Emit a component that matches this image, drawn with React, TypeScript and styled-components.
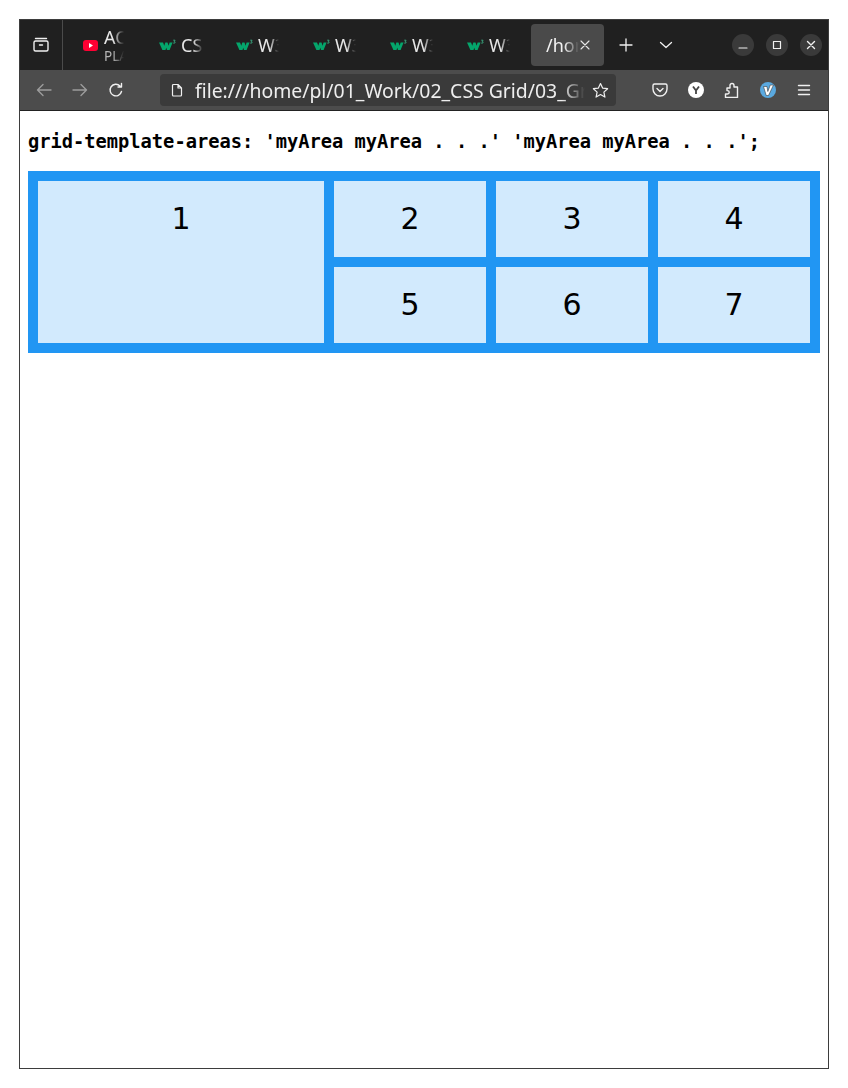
import React from "react";
import styled, { createGlobalStyle } from "styled-components";

const Global = createGlobalStyle`
  html, body { margin: 0; padding: 0; background: #fff; }
  body { width: 848px; height: 1088px; overflow: hidden; }
`;

const BrowserWindow = styled.div`
  box-sizing: border-box;
  width: 810px;
  height: 1050px;
  margin: 19px 0 0 19px;
  border: 1px solid #3d3d3d;
  display: flex;
  flex-direction: column;
  font-family: "Noto Sans", sans-serif;
`;

const TabBar = styled.div`
  height: 50px;
  background: #202020;
  display: flex;
  align-items: stretch;
  flex: none;
`;

const ViewButton = styled.div`
  box-sizing: border-box;
  width: 43px;
  border-right: 1px solid #4b4b4b;
  display: flex;
  align-items: center;
  justify-content: center;
  flex: none;
`;

const TabStrip = styled.div`
  box-sizing: border-box;
  display: flex;
  align-items: center;
  padding-left: 7px;
  width: 468px;
  flex: none;
`;

const Tab = styled.div`
  box-sizing: border-box;
  width: 77px;
  height: 42px;
  padding-left: 12px;
  display: flex;
  align-items: center;
  gap: 5px;
  color: #e6e6e6;
  font-size: 18px;
  flex: none;
`;

const MediaTab = styled(Tab)`
  padding-left: 13px;
  gap: 6px;
`;

const TabLabel = styled.div<{ $w: number }>`
  width: ${(p) => p.$w}px;
  overflow: hidden;
  white-space: nowrap;
  flex: none;
  -webkit-mask-image: linear-gradient(to right, #000 55%, transparent 100%);
  mask-image: linear-gradient(to right, #000 55%, transparent 100%);
`;

const Stack = styled.div`
  display: flex;
  flex-direction: column;
  width: 20px;
  overflow: hidden;
  line-height: 1;
  white-space: nowrap;
  -webkit-mask-image: linear-gradient(to right, #000 45%, transparent 100%);
  mask-image: linear-gradient(to right, #000 45%, transparent 100%);
`;

const TabTitle = styled.span`
  font-size: 18px;
  line-height: 22px;
  color: #e8e8e8;
`;

const TabSub = styled.span`
  font-size: 13.5px;
  line-height: 17px;
  color: #b5b5b5;
`;

const ActiveTab = styled.div`
  box-sizing: border-box;
  width: 73px;
  height: 42px;
  align-self: center;
  border-radius: 4px;
  background: #4a4a4a;
  display: flex;
  align-items: center;
  padding-left: 15px;
  color: #f2f2f2;
  font-size: 18px;
  flex: none;
`;

const TabActions = styled.div`
  display: flex;
  align-items: center;
  flex: none;
  padding-left: 15px;
  gap: 26px;
`;

const WindowControls = styled.div`
  margin-left: auto;
  display: flex;
  align-items: center;
  gap: 12px;
  padding-right: 6px;
`;

const WinButton = styled.div`
  width: 22px;
  height: 22px;
  border-radius: 50%;
  background: #3a3a3a;
  display: flex;
  align-items: center;
  justify-content: center;
`;

const Toolbar = styled.div`
  height: 40px;
  background: #4c4c4c;
  border-bottom: 1px solid #222;
  display: flex;
  align-items: center;
  flex: none;
`;

const NavGroup = styled.div`
  display: flex;
  align-items: center;
  gap: 20px;
  padding-left: 16px;
  width: 140px;
  box-sizing: border-box;
  flex: none;
`;

const UrlBar = styled.div`
  box-sizing: border-box;
  width: 456px;
  height: 32px;
  background: #3a3a3a;
  border-radius: 4px;
  display: flex;
  align-items: center;
  padding: 0 7px 0 10px;
  flex: none;
`;

const UrlText = styled.div`
  flex: 1;
  min-width: 0;
  margin: 0 7px 0 11px;
  overflow: hidden;
  white-space: nowrap;
  color: #eeeeee;
  font-size: 19.4px;
  -webkit-mask-image: linear-gradient(to right, #000 94%, transparent 100%);
  mask-image: linear-gradient(to right, #000 94%, transparent 100%);
`;

const ToolIcons = styled.div`
  display: flex;
  align-items: center;
  gap: 20px;
  padding-left: 36px;
`;

const Page = styled.div`
  flex: 1;
  background: #fff;
  padding: 1px 8px 0;
`;

const Heading = styled.h3`
  margin: 18.72px 0;
  font-family: "DejaVu Sans Mono", monospace;
  font-weight: 700;
  font-size: 18.72px;
  line-height: 22px;
  color: #000;
  white-space: pre;
`;

const Grid = styled.div`
  display: grid;
  grid-template-columns: repeat(2, 138px) repeat(3, 152px);
  grid-template-areas:
    "myArea myArea . . ."
    "myArea myArea . . .";
  gap: 10px;
  padding: 10px;
  background: #2196f3;
`;

const Cell = styled.div<{ $area?: string }>`
  ${(p) => (p.$area ? `grid-area: ${p.$area};` : "")}
  background: rgba(255, 255, 255, 0.8);
  padding: 20px;
  text-align: center;
  font-family: "DejaVu Sans", sans-serif;
  font-size: 30px;
  line-height: 36px;
  color: #000;
`;

const W3 = () => (
  <svg width="17" height="14" viewBox="0 0 17 14" style={{ flex: "none" }}>
    <path d="M0 4.500h4l1.300 3.200L6.300 4.500h2.200l1.100 3.200 1-3.200h3l-3 7.500H8L7.300 9.800 6.500 12H3.400z" fill="#04a56b" />
    <path d="M14.200 2.200h1.900l-.9 1.200 .9 .5-.3 1.200h-1.600" fill="none" stroke="#3fb98d" strokeWidth=".8" />
  </svg>
);

const YouTube = () => (
  <svg width="15" height="11" viewBox="0 0 15 11" style={{ flex: "none" }}>
    <rect width="15" height="11" rx="3" fill="#ff0033" />
    <path d="M6 3l4 2.500L6 8z" fill="#fff" />
  </svg>
);

const Line = (p: { size?: number; color?: string; sw?: number; d: string; vb?: number }) => {
  const { size = 16, color = "#f0f0f0", sw = 1.4, d, vb = 16 } = p;
  return (
    <svg width={size} height={size} viewBox={`0 0 ${vb} ${vb}`} fill="none" stroke={color} strokeWidth={sw} strokeLinecap="round" strokeLinejoin="round" style={{ flex: "none" }}>
      <path d={d} />
    </svg>
  );
};

const App = () => (
  <>
    <Global />
    <BrowserWindow>
      <TabBar>
        <ViewButton>
          <Line size={18} vb={18} d="M3.500 2.500h11M2 6.500A1.500 1.500 0 0 1 3.500 5h11A1.500 1.500 0 0 1 16 6.500v7a1.500 1.500 0 0 1-1.500 1.500h-11A1.500 1.500 0 0 1 2 13.500zM7.500 9h3" />
        </ViewButton>
        <TabStrip>
          <MediaTab>
            <YouTube />
            <Stack>
              <TabTitle>AC</TabTitle>
              <TabSub>PLAY</TabSub>
            </Stack>
          </MediaTab>
          <Tab>
            <W3 />
            <TabLabel $w={22}>CSS</TabLabel>
          </Tab>
          <Tab>
            <W3 />
            <TabLabel $w={21}>W3</TabLabel>
          </Tab>
          <Tab>
            <W3 />
            <TabLabel $w={21}>W3</TabLabel>
          </Tab>
          <Tab>
            <W3 />
            <TabLabel $w={21}>W3</TabLabel>
          </Tab>
          <Tab>
            <W3 />
            <TabLabel $w={21}>W3</TabLabel>
          </Tab>
        </TabStrip>
        <ActiveTab>
          <TabLabel $w={33}>/home</TabLabel>
          <Line size={12} vb={12} sw={1.1} color="#e8e8e8" d="M2 2l8 8M10 2l-8 8" />
        </ActiveTab>
        <TabActions>
          <Line size={14} vb={14} sw={1.3} d="M7 1v12M1 7h12" />
          <Line size={14} vb={14} sw={1.3} d="M1.500 4.500L7 9.500l5.500-5" />
        </TabActions>
        <WindowControls>
          <WinButton>
            <Line size={10} vb={10} sw={1.1} d="M1 8h8" />
          </WinButton>
          <WinButton>
            <Line size={10} vb={10} sw={1.2} d="M1.500 1.500h7v7h-7z" />
          </WinButton>
          <WinButton>
            <Line size={10} vb={10} sw={1.4} d="M1.500 1.500l7 7M8.500 1.500l-7 7" />
          </WinButton>
        </WindowControls>
      </TabBar>
      <Toolbar>
        <NavGroup>
          <Line size={16} color="#9c9c9c" d="M15 8H1.500M7 2.500L1.500 8 7 13.500" />
          <Line size={16} color="#9c9c9c" d="M1 8h13.500M9 2.500L14.500 8 9 13.500" />
          <Line size={16} d="M13.500 9.500A5.800 5.800 0 1 1 12 4M13.500 1.500v3.500H10" />
        </NavGroup>
        <UrlBar>
          <Line size={14} vb={14} sw={1.2} d="M2.500 2.500a1 1 0 0 1 1-1H8l3.500 3.500v7a1 1 0 0 1-1 1h-7a1 1 0 0 1-1-1zM8 1.500V5h3.500" />
          <UrlText>file:///home/pl/01_Work/02_CSS Grid/03_Grid</UrlText>
          <Line size={17} vb={17} sw={1.2} d="M8.500 1.500l2.100 4.600 5 .6-3.700 3.400 1 5-4.400-2.500-4.400 2.500 1-5L1.400 6.700l5-.6z" />
        </UrlBar>
        <ToolIcons>
          <Line size={16} d="M2.500 2h11A1.500 1.500 0 0 1 15 3.500V7A7 7 0 0 1 1 7V3.500A1.500 1.500 0 0 1 2.500 2zM5 6.500L8 9.500l3-3" />
          <svg width="16" height="16" viewBox="0 0 16 16" style={{ flex: "none" }}>
            <circle cx="8" cy="8" r="8" fill="#fff" />
            <path d="M5 4.500L8 8.500 11 4.500M8 8.500V12" fill="none" stroke="#444" strokeWidth="1.800" />
          </svg>
          <Line size={16} d="M6 6V3.500a2 2 0 0 1 4 0V5h3.500v10.500H1.500V12h2a1.700 1.700 0 0 0 0-3.400H3V6z" />
          <svg width="16" height="16" viewBox="0 0 16 16" style={{ flex: "none" }}>
            <circle cx="8" cy="8" r="8" fill="#5aa9e0" />
            <path d="M3.500 4.500h3.500l.8 5 2.500-6.500h3.200l-5 10.500H6.200z" fill="#fff" stroke="#3a3a3a" strokeWidth=".6" />
          </svg>
          <Line size={16} d="M2.500 3.500h11M2.500 8h11M2.500 12.500h11" />
        </ToolIcons>
      </Toolbar>
      <Page>
        <Heading>grid-template-areas: 'myArea myArea . . .' 'myArea myArea . . .';</Heading>
        <Grid>
          <Cell $area="myArea">1</Cell>
          <Cell>2</Cell>
          <Cell>3</Cell>
          <Cell>4</Cell>
          <Cell>5</Cell>
          <Cell>6</Cell>
          <Cell>7</Cell>
        </Grid>
      </Page>
    </BrowserWindow>
  </>
);

export default App;
